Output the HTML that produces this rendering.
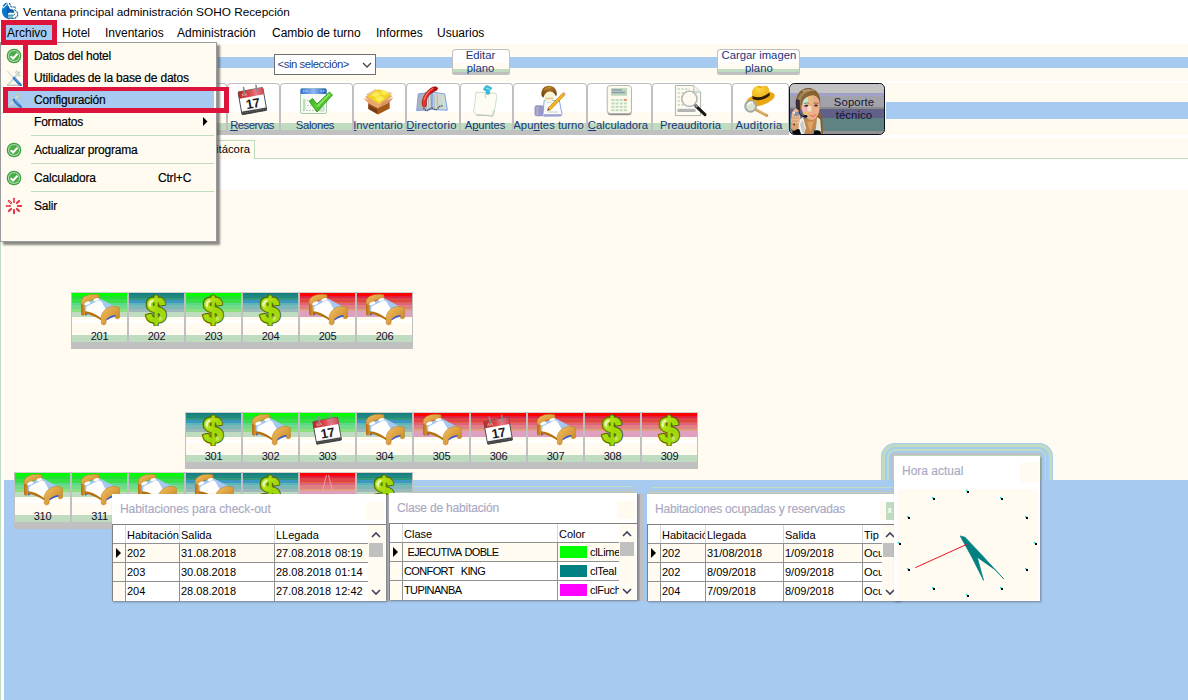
<!DOCTYPE html>
<html><head><meta charset="utf-8"><title>SOHO</title><style>
*{box-sizing:border-box;margin:0;padding:0}
html,body{width:1188px;height:700px;overflow:hidden;background:#FFFBF0;font-family:"Liberation Sans",sans-serif;font-size:12px;color:#000}
.a{position:absolute}
.t{position:absolute;white-space:nowrap;line-height:1}
.room{position:absolute;width:57px;height:57px;border-left:1px solid #C0C0C0;border-right:1px solid #C0C0C0;overflow:hidden;background:#FFFBF0}
.room .g{position:absolute;left:0;top:0;width:100%;height:24.5px}
.room .w{position:absolute;left:0;top:28px;width:100%;height:3px;background:#fff}
.room .m{position:absolute;left:0;top:43px;width:100%;height:7px;background:#C0DCC0}
.room .s{position:absolute;left:-1px;top:50px;width:58px;height:7px;background:#C0C0C0}
.room .n{position:absolute;left:0;top:38.5px;width:100%;text-align:center;font-size:11px;line-height:11px;color:#101030;letter-spacing:-0.35px}
.room svg{position:absolute}
.tb{position:absolute;top:83px;height:52px;border:1px solid #C0C0C0;border-bottom:none;border-radius:4px 4px 0 0;background:#fff;overflow:hidden}
.tb .c{position:absolute;left:0;top:28px;width:100%;height:12px;background:#FFFBF0}
.tb .m{position:absolute;left:0;top:39px;width:100%;height:7px;background:#C0DCC0}
.tb .s{position:absolute;left:-1px;top:46px;width:200px;height:6px;background:#C0C0C0}
.tb .l{position:absolute;left:-11.5px;right:-8.5px;top:35px;text-align:center;font-size:11.3px;line-height:13px;color:#1a357e;white-space:nowrap}
.tb u{text-decoration:underline}
.mi{position:absolute;left:34px;font-size:12px;line-height:14px;white-space:nowrap;color:#000;letter-spacing:-0.2px;-webkit-text-stroke:0.18px #000}
.sep{position:absolute;left:31px;width:183px;height:1px;background:#C0DCC0}
.pn{position:absolute;background:#fff;box-shadow:1px 1px 2px rgba(80,80,80,.6)}
.pt{position:absolute;font-size:12px;line-height:14px;color:#a9a9c3;white-space:nowrap;-webkit-text-stroke:0.15px #a9a9c3}
.gc{position:absolute;font-size:11px;line-height:12px;white-space:nowrap;color:#000;overflow:hidden;word-spacing:1px}
.vl{position:absolute;width:1px;background:#909090}
.hl{position:absolute;height:1px;background:#909090}
</style></head><body>
<svg width="0" height="0" style="position:absolute">
<defs>
<linearGradient id="wood" x1="0" y1="0" x2="1" y2="1"><stop offset="0" stop-color="#f0c060"/><stop offset=".5" stop-color="#dca040"/><stop offset="1" stop-color="#c08018"/></linearGradient>
<linearGradient id="wood2" x1="0" y1="0" x2="1" y2="0"><stop offset="0" stop-color="#b86c10"/><stop offset="1" stop-color="#d89830"/></linearGradient>
<linearGradient id="usdg" x1="0" y1="0" x2="1" y2="1"><stop offset="0" stop-color="#f0f4c0"/><stop offset=".3" stop-color="#c0e020"/><stop offset=".6" stop-color="#98d800"/><stop offset="1" stop-color="#b8d840"/></linearGradient>
<linearGradient id="calr" x1="0" y1="0" x2="1" y2="0"><stop offset="0" stop-color="#b82828"/><stop offset=".45" stop-color="#d84848"/><stop offset=".7" stop-color="#e87888"/><stop offset="1" stop-color="#d04858"/></linearGradient>
<linearGradient id="calp" x1="0" y1="0" x2="0" y2="1"><stop offset="0" stop-color="#ffffff"/><stop offset=".8" stop-color="#ffffff"/><stop offset="1" stop-color="#c8c8c8"/></linearGradient>
<linearGradient id="blu" x1="0" y1="0" x2="1" y2="0"><stop offset="0" stop-color="#3070d8"/><stop offset=".5" stop-color="#90b8f0"/><stop offset="1" stop-color="#2060c8"/></linearGradient>
<linearGradient id="grn" x1="0" y1="0" x2="1" y2="1"><stop offset="0" stop-color="#28a010"/><stop offset=".5" stop-color="#58d030"/><stop offset="1" stop-color="#209008"/></linearGradient>
<linearGradient id="redp" x1="0" y1="0" x2="1" y2="0"><stop offset="0" stop-color="#f04030"/><stop offset=".5" stop-color="#d81818"/><stop offset="1" stop-color="#a00808"/></linearGradient>
<radialGradient id="hatg" cx=".4" cy=".3" r=".8"><stop offset="0" stop-color="#ffd840"/><stop offset="1" stop-color="#e8a810"/></radialGradient>
<radialGradient id="hair" cx=".5" cy=".2" r=".8"><stop offset="0" stop-color="#b07828"/><stop offset="1" stop-color="#704008"/></radialGradient>
</defs>

<symbol id="bed" viewBox="0 0 57 40" overflow="visible">
<!-- blue sheet -->
<path d="M10 12.500 L27 6 L46.500 16.500 L33 19.500 L28.500 26.500 L13 21Z" fill="#a6c8f0"/>
<!-- white blanket -->
<path d="M14.500 14.500 L27 8.300 L29.500 9.800 L35 19.500 L32 21 L29 26.500 L14 20.500Z" fill="#fffefa"/>
<path d="M24 10 L28.500 9.800 L33.500 18.500 L30 21Z" fill="#fff"/>
<!-- headboard -->
<path d="M9.200 8.500 Q10.500 4.500 17 2.700 Q23 1.600 26.800 2.700 L27.200 6.500 L18 8.500 L12.500 11 L10.500 13.500 L9.200 13Z" fill="url(#wood)" stroke="#b87818" stroke-width=".5"/>
<!-- pillows -->
<ellipse cx="15.200" cy="11.300" rx="3.100" ry="1.600" fill="#fff" transform="rotate(-20 15.200 11.300)"/>
<ellipse cx="24.200" cy="7.600" rx="3" ry="1.500" fill="#fff" transform="rotate(-14 24.200 7.600)"/>
<!-- left post -->
<path d="M9 12 L12.800 13 L13 22.500 L11 24 L9 22.500Z" fill="url(#wood2)"/>
<!-- side rail -->
<path d="M12.800 19.300 Q20 19.500 29.500 26.300 L29.500 28.600 Q20 22 12.800 21.700Z" fill="#b4700c"/>
<path d="M13 21.800 L16 22.800 L13 23.500Z" fill="#3858c8"/>
<!-- footboard -->
<path d="M29.300 23.500 Q32 16 40 14.500 Q45 14 47.300 15.800 L47.600 25.500 L46 26.800 L43.600 26.300 L43.500 23 Q38 23.500 34.500 27 L33.800 32 L31.500 33 L29.300 31.800Z" fill="url(#wood)" stroke="#b87818" stroke-width=".5"/>
<path d="M34.500 27 Q38 23.500 43.500 23 L43.500 24.500 Q38.500 25.500 34.400 28.500Z" fill="#3858c8"/>
</symbol>

<symbol id="usd" viewBox="0 0 24 32" overflow="visible">
<g font-family="Liberation Sans, sans-serif" font-weight="bold" font-size="35" text-anchor="middle">
<text x="12" y="28" fill="#566800" stroke="#566800" stroke-width="3.400" stroke-linejoin="round">$</text>
<text x="12" y="28" fill="url(#usdg)" stroke="#a4dc08" stroke-width="1.200" stroke-linejoin="round">$</text>
</g>
<path d="M4.500 11 q.2 -4 4.500 -5.500 l.8 1.800 q-3 1.200 -3.200 3.700 q0 1.500 1 2.500 q-2.800 -.5 -3.100 -2.500z" fill="#fff" opacity=".7"/>
<path d="M14 22 q3.500 -.5 4 2 q0 2 -2.500 3z" fill="#fff" opacity=".35"/>
</symbol>

<symbol id="cal2" viewBox="0 0 30 30" overflow="visible">
<g transform="rotate(-10 14.400 16)">
<rect x="2.400" y="5" width="24" height="22" rx="1.200" fill="url(#calp)" stroke="#4a4a4a" stroke-width=".9"/>
<path d="M2.400 11.500 v-5.300 q0 -1.200 1.200 -1.200 h21.600 q1.200 0 1.200 1.200 v5.300z" fill="url(#calr)"/>
<path d="M5.500 10 l1 -2.500 l1 2.500 m.8 0 l1 -2.500 l1 2.500" stroke="#f8c0c0" stroke-width=".6" fill="none"/>
<rect x="2.400" y="24.300" width="24" height="2.700" fill="#3c3c3c"/>
<path d="M3 25.600 h23" stroke="#777" stroke-width=".7" stroke-dasharray="1.200 1"/>
<rect x="7.600" y="1" width="1.500" height="7.500" rx=".6" fill="#8c8c8c"/><rect x="19.600" y="1" width="1.500" height="7.500" rx=".6" fill="#8c8c8c"/>
<text x="14.400" y="22.600" font-family="Liberation Sans, sans-serif" font-weight="bold" font-size="12.500" text-anchor="middle" fill="#1c1c24" letter-spacing="-.3">17</text>
</g>
</symbol>

<symbol id="ok" viewBox="0 0 16 16">
<circle cx="8" cy="8" r="7.300" fill="#3c9c3c"/>
<circle cx="8" cy="8" r="6.100" fill="#b4e0b4"/>
<circle cx="8" cy="8" r="5.100" fill="#4cac4c"/>
<path d="M4.600 8.100 L7.100 10.500 L11.500 5.700" fill="none" stroke="#fff" stroke-width="2"/>
</symbol>
<symbol id="tools" viewBox="0 0 16 16" overflow="visible">
<path d="M1.500 1 L7.500 8" stroke="#c8ccc8" stroke-width="1"/>
<path d="M12.500 1.500 L9 6 L2 14 L1 15 L6 12 L10.500 6.500 L14 3.500Z" fill="#d8e4d8" stroke="#b8c8b8" stroke-width=".5"/>
<path d="M9.500 3 l1.500 -2.500 M11 4 l3 -2 M12 5.500 l3 .2" stroke="#b8ccb8" stroke-width="1.100"/>
<path d="M8 8 L14.500 15" stroke="#2c74c4" stroke-width="2.600" stroke-linecap="round"/>
<path d="M8.300 7.700 L13 12.600" stroke="#8cc0f0" stroke-width=".8"/>
<path d="M1 15.200 H14" stroke="#a8a8a8" stroke-width="1"/>
</symbol>
<symbol id="exit" viewBox="0 0 18 18">
<g stroke="#e03848" stroke-width="2.100" stroke-linecap="round">
<path d="M9 1.800 v3.200M9 13 v3.200M1.800 9 h3.200M13 9 h3.200M3.900 3.900 l2.200 2.200M11.900 11.900 l2.200 2.200M14.100 3.900 l-2.200 2.200M3.900 14.100 l2.200 -2.200"/>
</g>
<g stroke="#f8a0a8" stroke-width=".8" stroke-linecap="round"><path d="M9 2.300 v2.200M2.300 9 h2.200M4.300 4.300 l1.500 1.500"/></g>
</symbol>
<symbol id="clock" viewBox="0 0 141 111">
<g fill="#00e0e8"><rect x="69" y="1" width="1.6" height="1.6"/><rect x="103" y="8" width="1.6" height="1.6"/><rect x="128" y="27" width="1.6" height="1.6"/><rect x="137" y="53" width="1.6" height="1.6"/><rect x="128" y="79" width="1.6" height="1.6"/><rect x="103" y="98" width="1.6" height="1.6"/><rect x="69" y="105" width="1.6" height="1.6"/><rect x="35" y="98" width="1.6" height="1.6"/><rect x="10" y="79" width="1.6" height="1.6"/><rect x="1" y="53" width="1.6" height="1.6"/><rect x="10" y="27" width="1.6" height="1.6"/><rect x="35" y="8" width="1.6" height="1.6"/></g>
<g fill="#000"><rect x="70" y="2" width="2" height="2"/><rect x="104" y="9" width="2" height="2"/><rect x="129" y="28" width="2" height="2"/><rect x="138" y="54" width="2" height="2"/><rect x="129" y="80" width="2" height="2"/><rect x="104" y="99" width="2" height="2"/><rect x="70" y="106" width="2" height="2"/><rect x="36" y="99" width="2" height="2"/><rect x="11" y="80" width="2" height="2"/><rect x="2" y="54" width="2" height="2"/><rect x="11" y="28" width="2" height="2"/><rect x="36" y="9" width="2" height="2"/></g>
<path d="M63.200 46.900 L68 48.200 L83.600 64.700 L106.800 90 L97.600 80.400 L80.200 68.200 L86.600 91.400 L74.900 68.200 L66.200 52.500Z" fill="#008080" stroke="#008080" stroke-width=".7" stroke-linejoin="miter"/>
<path d="M70.900 54.800 L18.300 78.700" stroke="#f01028" stroke-width="1"/>
</symbol>
<symbol id="appicon" viewBox="0 0 20 20">
<path d="M8 2.800 Q2 4.500 1.900 11 Q2.300 17.500 8 18.900 L8 2.800Z" fill="#0878c8"/>
<path d="M2.300 7.800 L7.600 3 L8 4 L3 8.500Z" fill="#fff"/>
<path d="M3 6 L6.500 3" stroke="#0878c8" stroke-width="1.200"/>
<path d="M8.500 5.800 L10 9 L13.200 9.500 L13 11.500 L11.500 12.500 L9 12.800 L7 14.500 L6.800 9Z" fill="#0858c4"/>
<path d="M10.500 9.500 L13.500 10 L14.500 12.500 L12 13 L10.500 12Z" fill="#10688c"/>
<path d="M9.300 3 L11.200 6.800 L15.500 7.200 L15.500 8.500 M14.300 9.600 L16.600 11.500 L17.800 13.600 L17.500 15.800 L15 18.300 L8 18.600" fill="none" stroke="#106490" stroke-width="1.100" stroke-dasharray="2.500 .6"/>
<path d="M8 15.200 h5.500 l1.500 -1.500 M8 17 h5" stroke="#107090" stroke-width="1" fill="none"/>
</symbol>
</svg>

<div class="a" style="left:0px;top:0px;width:1188px;height:44px;background:#fff;"></div>
<svg class="a" style="left:0px;top:0px" width="20" height="20" viewBox="0 0 20 20"><use href="#appicon"/></svg>
<div class="t" style="left:23px;top:7px;font-size:11.8px;color:#000;letter-spacing:0px">Ventana principal administración SOHO Recepción</div>
<div class="a" style="left:6px;top:25px;width:46px;height:15px;background:#A6CAF0;"></div>
<div class="t" style="left:7px;top:26.5px;font-size:12px;color:#000;">Archivo</div>
<div class="t" style="left:62px;top:26.5px;font-size:12px;color:#000;">Hotel</div>
<div class="t" style="left:105px;top:26.5px;font-size:12px;color:#000;">Inventarios</div>
<div class="t" style="left:177px;top:26.5px;font-size:12px;color:#000;">Administración</div>
<div class="t" style="left:272px;top:26.5px;font-size:12px;color:#000;">Cambio de turno</div>
<div class="t" style="left:376px;top:26.5px;font-size:12px;color:#000;">Informes</div>
<div class="t" style="left:437px;top:26.5px;font-size:12px;color:#000;">Usuarios</div>
<div class="a" style="left:0px;top:44px;width:1px;height:656px;background:#C0DCC0;"></div>
<div class="a" style="left:1px;top:44px;width:3px;height:656px;background:#fff;"></div>
<div class="a" style="left:218px;top:57px;width:970px;height:11px;background:#A6CAF0;"></div>
<div class="a" style="left:218px;top:81px;width:970px;height:2px;background:#fff;"></div>
<div class="a" style="left:886px;top:102px;width:302px;height:17px;background:#A6CAF0;"></div>
<div class="a" style="left:218px;top:135px;width:970px;height:3px;background:#fff;"></div>
<div class="a" style="left:218px;top:158px;width:970px;height:1px;background:#C0DCC0;"></div>
<div class="a" style="left:218px;top:159px;width:970px;height:31px;background:#fff;"></div>
<div class="a" style="left:4px;top:480px;width:1184px;height:220px;background:#A6CAF0;"></div>
<div class="a" style="left:274px;top:54px;width:101.5px;height:21px;background:#fff;border:1px solid #707070"></div>
<div class="t" style="left:277.6px;top:59px;font-size:11.3px;color:#1c3c84;letter-spacing:-0.43px">&lt;sin selección&gt;</div>
<svg class="a" style="left:361.500px;top:62px" width="10" height="7" viewBox="0 0 10 7"><path d="M1 1 L5 5 L9 1" fill="none" stroke="#44443a" stroke-width="1.300"/></svg>
<div class="a" style="left:451.5px;top:49px;width:58px;height:25.6px;background:#fff;border:1px solid #C0C0C0;border-bottom:none;border-radius:3.5px 3.5px 2px 2px;overflow:hidden"><div class="a" style="left:0;top:13.200px;width:100%;height:7px;background:#FFFBF0"></div><div class="a" style="left:0;top:19.200px;width:100%;height:3px;background:#C0DCC0"></div><div class="a" style="left:-1px;top:22.100px;width:58px;height:4px;background:#C0C0C0"></div><div class="a" style="left:0;top:-1.400px;width:100%;text-align:center;font-size:11.3px;line-height:13.500px;color:#1a357e;white-space:nowrap">Editar<br>plano</div></div>
<div class="a" style="left:717.3px;top:49px;width:83.2px;height:25.6px;background:#fff;border:1px solid #C0C0C0;border-bottom:none;border-radius:3.5px 3.5px 2px 2px;overflow:hidden"><div class="a" style="left:0;top:13.200px;width:100%;height:7px;background:#FFFBF0"></div><div class="a" style="left:0;top:19.200px;width:100%;height:3px;background:#C0DCC0"></div><div class="a" style="left:-1px;top:22.100px;width:83.2px;height:4px;background:#C0C0C0"></div><div class="a" style="left:0;top:-1.400px;width:100%;text-align:center;font-size:11.3px;line-height:13.500px;color:#1a357e;white-space:nowrap">Cargar imagen<br>plano</div></div>
<div class="tb" style="left:173px;width:54px"><div class="c"></div><div class="m"></div><div class="s"></div><div class="l" style="letter-spacing:0px"></div></div>
<div class="tb" style="left:227px;width:53px"><div class="c"></div><div class="m"></div><div class="s"></div><div class="l" style="letter-spacing:-0.5px"><u>R</u>eservas</div></div>
<div class="tb" style="left:280px;width:73px"><div class="c"></div><div class="m"></div><div class="s"></div><div class="l" style="letter-spacing:-0.36px">Salones</div></div>
<div class="tb" style="left:353px;width:53px"><div class="c"></div><div class="m"></div><div class="s"></div><div class="l" style="letter-spacing:0px"><u>I</u>nventario</div></div>
<div class="tb" style="left:406px;width:54px"><div class="c"></div><div class="m"></div><div class="s"></div><div class="l" style="letter-spacing:0.24px"><u>D</u>irectorio</div></div>
<div class="tb" style="left:460px;width:53px"><div class="c"></div><div class="m"></div><div class="s"></div><div class="l" style="letter-spacing:-0.13px">A<u>p</u>untes</div></div>
<div class="tb" style="left:513px;width:74px"><div class="c"></div><div class="m"></div><div class="s"></div><div class="l" style="letter-spacing:0px">Apu<u>n</u>tes turno</div></div>
<div class="tb" style="left:587px;width:65px"><div class="c"></div><div class="m"></div><div class="s"></div><div class="l" style="letter-spacing:0px"><u>C</u>alculadora</div></div>
<div class="tb" style="left:652px;width:80px"><div class="c"></div><div class="m"></div><div class="s"></div><div class="l" style="letter-spacing:0px">Preauditoria</div></div>
<div class="tb" style="left:732px;width:57px"><div class="c"></div><div class="m"></div><div class="s"></div><div class="l" style="letter-spacing:0.27px">Audi<u>t</u>oria</div></div>
<svg class="a" style="left:0;top:80px;pointer-events:none" width="1188" height="60" viewBox="0 80 1188 60">
<!-- calendar -->
<g transform="translate(237.3,84.3)"><use href="#cal2" width="31.5" height="31.5"/></g>
<!-- salones -->
<g transform="translate(300,88)">
<rect x=".5" y=".5" width="26" height="25" rx="1.500" fill="#f6faf2" stroke="#a8cca8"/>
<path d="M.5 6 v-4 q0 -1.500 1.500 -1.500 h23 q1.500 0 1.500 1.500 v4z" fill="url(#blu)"/>
<path d="M3 3h5M20.500 3h4" stroke="#e0ecff" stroke-width="1.200" stroke-dasharray="1.500 .8"/>
<rect x="3" y="11" width="2.500" height="11" fill="#c4dcc4"/>
<path d="M7 12.500h6M7 17.500h8M3 22.500h16" stroke="#a8c8a8" stroke-width="1.200" stroke-dasharray="1.500 1.500"/>
<path d="M19 23 l5 -5 v5z" fill="#dde8dd" stroke="#a8c8a8" stroke-width=".6"/>
<path d="M9.200 13.200 L12.500 10.500 L17 16 L29.500 4 L32.500 7 L17 24 Z" fill="url(#grn)" stroke="#1c7c08" stroke-width=".7"/>
<path d="M17.500 18.500 L29.500 6" stroke="#a8f088" stroke-width="1.200" opacity=".8"/>
</g>
<!-- box -->
<g transform="translate(363,87)">
<path d="M3 7.500 L12.500 2 L16 5 L6 10Z" fill="#f0c098"/>
<path d="M17 2.500 L29.500 6 L26 10 L15 5.500Z" fill="#f0c8a0"/>
<path d="M2 10 L15 3 L29.500 9 L15 21Z" fill="#e8a870"/>
<path d="M4.500 9.500 L15 2 L27.500 8 L16 17Z" fill="#f0d418"/>
<path d="M8 8 L13 4.500 L18 7 L13 10.500Z M17 5 L21 3 L25.500 6 L21 8.500Z M11.500 12 L17 8.500 L22 11.500 L16.500 15Z" fill="#faec58"/>
<path d="M5.200 16 L14.900 20.900 L14.900 27.500 L5.200 22Z" fill="#7c3c10"/>
<path d="M14.900 20.900 L26.700 15 L26.700 21.400 L14.900 27.500Z" fill="#a45818"/>
<path d="M.3 11 L5.200 16 L14.900 20.900 L10.500 14.500Z" fill="#eca468"/>
<path d="M14.900 20.900 L26.700 15 L30.500 10.500 L19.500 15.500Z" fill="#d8905c"/>
<path d="M5.200 16 L14.900 20.900 L14.900 22.500 L5.200 17.500Z" fill="#b87840" opacity=".7"/>
</g>
<!-- phone / directorio -->
<g transform="translate(416,86)">
<path d="M2.300 7.900 L15.200 6.200 L15.700 23.500 L.7 24.600Z" fill="#aeb4bc" stroke="#6c98e4" stroke-width=".9"/>
<path d="M16.300 6.200 L28.700 7.900 L31.400 24.200 L16.300 23.500Z" fill="#d4dad4" stroke="#6c98e4" stroke-width=".9"/>
<path d="M11 8 L12 23 M13.500 7.500 L14 23" stroke="#d8dce0" stroke-width="1.300"/>
<path d="M18 8 L18.500 22 M21 8.500 L22 22.500" stroke="#b8c0b8" stroke-width="1.500"/>
<path d="M24 9 L26 22" stroke="#c8dcc8" stroke-width="2.500"/>
<path d="M7.500 22 Q10 26.500 13 23.500 Q16 20.500 18 23 Q20 25 22 22 Q24 19.500 26.500 20" fill="none" stroke="#444c58" stroke-width="1.300" stroke-dasharray="1.400 .7"/>
<path d="M21 1.200 Q19 .4 16.500 1.200 Q8.500 5.500 6.200 15 Q5.500 19.500 7.500 21 Q10.500 21.500 10.500 17.500 Q10 16 10.800 13 Q12.500 8 18 5.500 Q21.500 4.500 21.800 2.500Z" fill="url(#redp)" stroke="#8c0c0c" stroke-width=".6"/>
<path d="M17.500 2.200 Q10.500 6 8 14" fill="none" stroke="#ff9080" stroke-width="1.200" opacity=".8"/>
</g>
<!-- note / apuntes -->
<g transform="translate(473,85)">
<path d="M3.500 30.500 L20 31.500 L22 25.500 L3 29Z" fill="#a8a8a8"/>
<path d="M2.800 7.200 L22.700 8.300 L23.800 11.500 L21.600 25 L19.500 30.500 L2.800 29.500 L.6 26.100 L2.200 16.400Z" fill="#fffcf3" stroke="#c4dcc4" stroke-width=".9"/>
<path d="M19.500 30.500 L19 26.500 L21.600 25Z" fill="#e8efe4" stroke="#c4dcc4" stroke-width=".5"/>
<path d="M12 9 q1 2 .5 4" stroke="#b8d8c8" stroke-width="1" fill="none"/>
<path d="M11.500 2.500 Q12 .3 14.500 .5 L18.500 2.500 Q19.500 4 17.500 5 L16.500 5.500 L17 8.500 Q15 10 13 9 L13 6 Q10.500 5.500 10.300 4Z" fill="#34bcd4" stroke="#5c9cd4" stroke-width=".5"/>
<path d="M13 3 L17 4.500" stroke="#a0f0f8" stroke-width="1"/>
</g>
<!-- user / apuntes turno -->
<g transform="translate(534,85)">
<rect x=".5" y="20.200" width="9.500" height="11" rx="2.500" fill="#9898c4"/>
<rect x="2" y="22" width="3" height="8" fill="#a8a8d0"/>
<path d="M10.200 15.300 L25.300 15.300 L28 29.300 Q28 31 26 31 L10 31.200 Q8.500 31 9 29Z" fill="#fdfdff" stroke="#7c9ce4" stroke-width=".9"/>
<path d="M10 30 H27" stroke="#8c8cc0" stroke-width="1.400"/>
<ellipse cx="15" cy="11.500" rx="5" ry="5.300" fill="#fbf4d4"/>
<path d="M11 13.500 h8" stroke="#e0c890" stroke-width="1.500"/>
<path d="M12 17 q3 2 6 0" stroke="#c8dcc8" stroke-width="1" fill="none"/>
<path d="M7.500 10.500 Q6.500 2 14 .8 Q21.500 .5 22.800 8 Q23 10.500 22 11.500 Q19.500 6 15.500 6.500 Q11 7 9.500 12.500 Q8 12 7.500 10.500Z" fill="url(#hair)"/>
<path d="M10 5 Q13 2 17 2.500" stroke="#d0a040" stroke-width="1" fill="none" opacity=".8"/>
<path d="M13.400 25.600 L14.600 22.400 L28.600 8.200 L30.800 10 L16.600 24.800Z" fill="#f4b41c" stroke="#a87410" stroke-width=".6"/>
<path d="M28.600 8.200 L29.800 7 L31.800 8.800 L30.800 10Z" fill="#f090a0"/>
<path d="M13.400 25.600 L14.300 23.500 L15.500 24.800Z" fill="#403020"/>
<path d="M14 27 h10" stroke="#a8c8a8" stroke-width=".8"/>
</g>
<!-- calc -->
<g transform="translate(606,85)">
<rect x="1.500" y="1.500" width="24" height="28.800" rx="3" fill="#909090"/>
<rect x="1.200" y=".5" width="24.300" height="28" rx="3" fill="#fdf9ec" stroke="#b0b0b0" stroke-width=".9"/>
<rect x="4.900" y="3.200" width="16.200" height="7.500" fill="#bcd4bc"/>
<path d="M6 5 h10 M6 7.500 h13" stroke="#8c9cb0" stroke-width="1.300"/>
<g fill="#bcdcbc">
<rect x="5.500" y="14" width="3" height="2"/><rect x="9.600" y="14" width="3" height="2"/><rect x="13.700" y="14" width="3" height="2"/><rect x="17.800" y="14" width="3" height="2" fill="#e89070"/>
<rect x="5.500" y="17.400" width="3" height="2"/><rect x="9.600" y="17.400" width="3" height="2"/><rect x="13.700" y="17.400" width="3" height="2"/><rect x="17.800" y="17.400" width="3" height="2"/>
<rect x="5.500" y="20.800" width="3" height="2"/><rect x="9.600" y="20.800" width="3" height="2"/><rect x="13.700" y="20.800" width="3" height="2"/><rect x="17.800" y="20.800" width="3" height="2"/>
<rect x="5.500" y="24.200" width="3" height="2"/><rect x="9.600" y="24.200" width="3" height="2"/><rect x="13.700" y="24.200" width="3" height="2"/><rect x="17.800" y="24.200" width="3" height="2"/>
</g>
</g>
<!-- preauditoria -->
<g transform="translate(675,85)">
<path d="M.4 .5 L18.700 .5 L25.600 7 L25.600 30.600 L.4 30.600Z" fill="#fdfaf0" stroke="#a4aca4" stroke-width=".9"/>
<path d="M18.700 .5 L18.700 7 L25.600 7" fill="#eef2ea" stroke="#a4aca4" stroke-width=".7"/>
<path d="M2.500 4h12M2.500 8h20M2.500 12h20M2.500 16h20M2.500 20h20" stroke="#c0dcc0" stroke-width="1.300" stroke-dasharray="2.500 1.200"/>
<rect x="2.500" y="23.800" width="18" height="3.200" fill="#b4b4b4"/>
<circle cx="14.400" cy="13.800" r="7.600" fill="#fff9f2" fill-opacity=".93" stroke="#b4b8b4" stroke-width="1.500"/>
<path d="M10 10 q3 -3 7 -2" stroke="#fff" stroke-width="1.500" fill="none"/>
<path d="M20.800 20.800 L30 29.600" stroke="#181818" stroke-width="3" stroke-linecap="round"/>
<path d="M20 19.500 L22.500 22" stroke="#909090" stroke-width="2.200"/>
</g>
<!-- hat / auditoria -->
<g transform="translate(745,85)">
<ellipse cx="15.300" cy="14.200" rx="15" ry="6.200" fill="#eaa810" transform="rotate(-17 15.300 14.200)"/>
<path d="M7.500 12.500 Q5.500 2.500 12 1 Q15 .2 17 1.500 Q20 -.2 22.500 1.500 Q25 4 24.500 9.500 Q17 15.500 7.500 12.500Z" fill="url(#hatg)"/>
<path d="M13 1.500 Q16 3.500 17 1.700" stroke="#d89808" stroke-width="1" fill="none"/>
<path d="M7.400 11 Q16 14.500 24.600 7.600 L24.600 10.800 Q16 17.500 7.600 14Z" fill="#2c1c08"/>
<path d="M10.600 24.600 L21.800 30.500" stroke="#c8984c" stroke-width="2.800" stroke-linecap="round"/>
<path d="M11 24.300 L21 29.600" stroke="#ecc888" stroke-width=".9"/>
<circle cx="5.600" cy="21.300" r="5.400" fill="#dce4d0" stroke="#a4a8a8" stroke-width="1.900"/>
<path d="M2.500 20 q2 -3.500 5.500 -2.500" stroke="#fff" stroke-width="1.400" fill="none"/>
</g>
</svg>

<div class="a" style="left:789px;top:83px;width:96px;height:52px;border:1.3px solid #10101c;border-radius:5.5px;background:#5f8383;overflow:hidden"><div class="a" style="left:0;top:0;width:100%;height:8.8px;background:#C3C3C3"></div><div class="a" style="left:0;top:8.6px;width:100%;height:0.8px;background:#b0d0d0"></div><div class="a" style="left:0;top:9.2px;width:100%;height:2.8px;background:#a0a0c8"></div><div class="a" style="left:0;top:11.9px;width:100%;height:11px;background:#a2a2aa"></div><div class="a" style="left:0;top:22.8px;width:100%;height:2.3px;background:#8a8a8a"></div><div class="a" style="left:0;top:25px;width:100%;height:8.8px;background:#606088"></div><div class="a" style="left:0;top:46.7px;width:100%;height:4px;background:#929292"></div><svg class="a" style="left:0;top:0" width="36" height="50" viewBox="0 0 36 50">
<!-- hair back -->
<path d="M6 24 Q4.500 10 12 5.800 Q18.500 2.800 25 6 Q30.500 9.500 30.200 19 L30 30 L31.500 38 L33 50 L26 50 L24 30 Z" fill="#86602c"/>
<path d="M7.500 24 Q6 13 13 7.500 Q18.500 4.800 24.500 7.200 Q21 6.800 17 8.500 Q10 12 10.500 22Z" fill="#a08458"/>
<path d="M12 6.300 Q18.500 3.200 25.500 6.800 Q19.500 5.800 14 8Z" fill="#b89c78"/>
<path d="M14 5.500 Q18 4 22 5" stroke="#74503c" stroke-width="1" fill="none"/>
<path d="M6 15 Q5 24 8 29 L10 28 L9.800 16Z" fill="#3c2c38"/>
<!-- neck/chest -->
<path d="M13.500 35 L27 34 L26 43 L21 50 L15.500 50 L13 42Z" fill="#c4864a"/>
<path d="M17 38 L24 37 L20.500 48Z" fill="#dca466"/>
<!-- face -->
<path d="M10.800 21 Q10.500 11.500 19.500 10.500 Q29 10.300 29.800 20 Q30.200 29 26 34 Q22 37.500 17.500 34.500 Q11.500 30 10.800 21Z" fill="#eab088"/>
<path d="M12 18 Q13.500 12.500 18 12.500 L18.500 19 L14.500 21.500 L12 21Z" fill="#c4e4d4"/>
<path d="M18 12.500 Q21 11.500 23 12.500 L23 19.500 L18.500 19.500Z" fill="#e8bc80"/>
<path d="M23 12.500 Q28 13.500 29 20 L23 20.500Z" fill="#e8aa8c"/>
<path d="M11.500 23.500 L16 23 L16.500 27 L13 28Z" fill="#ecb4d4"/>
<path d="M17 22 L21.500 22 L21.500 27.500 L17.500 27.500Z" fill="#f4dcc8"/>
<path d="M13 28 L18 28 L18 31 L15 32Z" fill="#e8c070"/>
<!-- hair front strands -->
<path d="M10.500 21 Q9.500 11 18 9.300 Q24 8.300 29.300 12.500 Q24 10.500 19 12 Q12.500 14 12 22Z" fill="#8a6434"/>
<!-- eyes -->
<ellipse cx="16.300" cy="21.700" rx="1.900" ry="1" fill="#3c2830"/>
<ellipse cx="26" cy="21.400" rx="1.900" ry="1" fill="#3c2830"/>
<path d="M13.800 19.800 q2.500 -1.500 5 -.5 M23.500 19.300 q2.500 -1 5 .3" stroke="#7c5028" stroke-width=".7" fill="none"/>
<!-- mouth -->
<path d="M18.800 30.800 Q22.500 32.800 26.500 30 Q23.500 35 18.800 30.800Z" fill="#e04858"/>
<path d="M19.800 31.200 Q22.500 32.200 25.500 30.700 Q22.500 32 19.800 31.200Z" fill="#fff"/>
<!-- collar & jacket -->
<path d="M8 37 L13 33 L16 44 L14 50 L6 50 Z" fill="#f0f0ea"/>
<path d="M10 40 L13 36 L15 46 L13 50Z" fill="#c8ccc4"/>
<path d="M27 33 L31 36 L33 50 L24 50 L26 43Z" fill="#e4e8dc"/>
<path d="M29.800 29 L32 32 L33 50 L31.300 50Z" fill="#8c5a20"/>
<path d="M2 50 L3 45.500 Q6 43.500 9.500 45.500 L11 50Z" fill="#080808"/>
<path d="M23.500 50 L24.500 46.500 Q28 45.500 30.500 47.500 L31 50Z" fill="#080808"/>
<!-- hand with phone -->
<path d="M1.500 31 Q2 26 6 24.500 L9.500 27 L10.500 34 L8.500 42 L3 44 L1 38Z" fill="#e8b890"/>
<path d="M3.500 28.500 L9.500 27.500 L10 31 L4.500 32.500Z" fill="#8890a4"/>
<path d="M2 29 L5 27.500 L5 30Z" fill="#f4ece4"/>
<path d="M2 34 h7 M2 37 h6" stroke="#c89468" stroke-width=".8"/>
<path d="M1 38.500 L8 39.500 L9 44 L4 47 L.8 44Z" fill="#dca070"/>
<path d="M2.500 40 L5 39.500 L5 42Z" fill="#5c4030"/>
<!-- headset -->
<path d="M9 27 Q9.500 32.500 15 32.500" fill="none" stroke="#202020" stroke-width="1"/>
<ellipse cx="15.600" cy="32.200" rx="1.800" ry="1.300" fill="#0c0c0c"/>
</svg>
<div class="a" style="left:33px;top:11.5px;width:62px;text-align:center;font-size:11.3px;line-height:13px;color:#14142c;letter-spacing:.1px">Soporte<br>técnico</div></div>
<div class="a" style="left:200px;top:140px;width:55px;height:19px;background:#FFFBF0;border:1px solid #C0DCC0;border-bottom:none"></div>
<div class="t" style="left:208.5px;top:144px;font-size:11.3px;color:#000;">Bitácora</div>
<div class="a" style="left:393px;top:486px;width:240px;height:1px;background:#C0DCC0;"></div>
<div class="a" style="left:391px;top:489.3px;width:244px;height:1px;background:#bcc4c8;"></div>
<div class="a" style="left:390px;top:491.4px;width:246px;height:1.6px;background:#c0ccc0;"></div>
<div class="a" style="left:651px;top:487px;width:245px;height:1px;background:#C0DCC0;"></div>
<div class="a" style="left:649px;top:490.3px;width:249px;height:1px;background:#bcc4c8;"></div>
<div class="a" style="left:648px;top:492.4px;width:251px;height:1.6px;background:#c0ccc0;"></div>
<div class="room" style="left:71px;top:292px"><div class="g" style="background:linear-gradient(#00ff00 0px,#00ff00 4.25px,#20e030 4.25px,#20e030 6.75px,#38de48 6.75px,#38de48 11px,#5cd88c 11px,#5cd88c 13.25px,#70dc88 13.25px,#70dc88 16.75px,#8ce080 16.75px,#8ce080 20px,#C0DCC0 20px,#C0DCC0 24.5px)"></div><div class="a" style="left:0;top:0;width:100%;height:0.6px;background:#d0d0d0"></div><div class="w"></div><div class="m"></div><div class="s"></div><svg style="left:0;top:0" width="57" height="40" viewBox="0 0 57 40"><use href="#bed"/></svg><div class="n">201</div></div>
<div class="room" style="left:128px;top:292px"><div class="g" style="background:linear-gradient(#148080 0px,#148080 3.25px,#208880 3.25px,#208880 5.75px,#30987c 5.75px,#30987c 8px,#3c98c0 8px,#3c98c0 10.75px,#5cb8b8 10.75px,#5cb8b8 13.25px,#7cb8b8 13.25px,#7cb8b8 16.75px,#9cb8b8 16.75px,#9cb8b8 19.75px,#C0DCC0 19.75px,#C0DCC0 24px)"></div><div class="a" style="left:0;top:0;width:100%;height:0.6px;background:#d0d0d0"></div><div class="w"></div><div class="m"></div><div class="s"></div><svg style="left:15.2px;top:1.8px" width="24" height="32" viewBox="0 0 24 32"><use href="#usd"/></svg><div class="n">202</div></div>
<div class="room" style="left:185px;top:292px"><div class="g" style="background:linear-gradient(#00ff00 0px,#00ff00 4.25px,#20e030 4.25px,#20e030 6.75px,#38de48 6.75px,#38de48 11px,#5cd88c 11px,#5cd88c 13.25px,#70dc88 13.25px,#70dc88 16.75px,#8ce080 16.75px,#8ce080 20px,#C0DCC0 20px,#C0DCC0 24.5px)"></div><div class="a" style="left:0;top:0;width:100%;height:0.6px;background:#d0d0d0"></div><div class="w"></div><div class="m"></div><div class="s"></div><svg style="left:15.2px;top:1.8px" width="24" height="32" viewBox="0 0 24 32"><use href="#usd"/></svg><div class="n">203</div></div>
<div class="room" style="left:242px;top:292px"><div class="g" style="background:linear-gradient(#148080 0px,#148080 3.25px,#208880 3.25px,#208880 5.75px,#30987c 5.75px,#30987c 8px,#3c98c0 8px,#3c98c0 10.75px,#5cb8b8 10.75px,#5cb8b8 13.25px,#7cb8b8 13.25px,#7cb8b8 16.75px,#9cb8b8 16.75px,#9cb8b8 19.75px,#C0DCC0 19.75px,#C0DCC0 24px)"></div><div class="a" style="left:0;top:0;width:100%;height:0.6px;background:#d0d0d0"></div><div class="w"></div><div class="m"></div><div class="s"></div><svg style="left:15.2px;top:1.8px" width="24" height="32" viewBox="0 0 24 32"><use href="#usd"/></svg><div class="n">204</div></div>
<div class="room" style="left:299px;top:292px"><div class="g" style="background:linear-gradient(#ff0000 0px,#ff0000 4px,#e02040 4px,#e02040 6px,#e04444 6px,#e04444 9.75px,#e06040 9.75px,#e06040 11px,#e06080 11px,#e06080 13px,#e08080 13px,#e08080 17px,#e0a080 17px,#e0a080 19px,#e0a0c0 19px,#e0a0c0 24px)"></div><div class="a" style="left:0;top:0;width:100%;height:0.6px;background:#d0d0d0"></div><div class="w"></div><div class="m"></div><div class="s"></div><svg style="left:0;top:0" width="57" height="40" viewBox="0 0 57 40"><use href="#bed"/></svg><div class="n">205</div></div>
<div class="room" style="left:356px;top:292px"><div class="g" style="background:linear-gradient(#ff0000 0px,#ff0000 4px,#e02040 4px,#e02040 6px,#e04444 6px,#e04444 9.75px,#e06040 9.75px,#e06040 11px,#e06080 11px,#e06080 13px,#e08080 13px,#e08080 17px,#e0a080 17px,#e0a080 19px,#e0a0c0 19px,#e0a0c0 24px)"></div><div class="a" style="left:0;top:0;width:100%;height:0.6px;background:#d0d0d0"></div><div class="w"></div><div class="m"></div><div class="s"></div><svg style="left:0;top:0" width="57" height="40" viewBox="0 0 57 40"><use href="#bed"/></svg><div class="n">206</div></div>
<div class="room" style="left:185px;top:412px"><div class="g" style="background:linear-gradient(#148080 0px,#148080 3.25px,#208880 3.25px,#208880 5.75px,#30987c 5.75px,#30987c 8px,#3c98c0 8px,#3c98c0 10.75px,#5cb8b8 10.75px,#5cb8b8 13.25px,#7cb8b8 13.25px,#7cb8b8 16.75px,#9cb8b8 16.75px,#9cb8b8 19.75px,#C0DCC0 19.75px,#C0DCC0 24px)"></div><div class="a" style="left:0;top:0;width:100%;height:0.6px;background:#d0d0d0"></div><div class="w"></div><div class="m"></div><div class="s"></div><svg style="left:15.2px;top:1.8px" width="24" height="32" viewBox="0 0 24 32"><use href="#usd"/></svg><div class="n">301</div></div>
<div class="room" style="left:242px;top:412px"><div class="g" style="background:linear-gradient(#00ff00 0px,#00ff00 4.25px,#20e030 4.25px,#20e030 6.75px,#38de48 6.75px,#38de48 11px,#5cd88c 11px,#5cd88c 13.25px,#70dc88 13.25px,#70dc88 16.75px,#8ce080 16.75px,#8ce080 20px,#C0DCC0 20px,#C0DCC0 24.5px)"></div><div class="a" style="left:0;top:0;width:100%;height:0.6px;background:#d0d0d0"></div><div class="w"></div><div class="m"></div><div class="s"></div><svg style="left:0;top:0" width="57" height="40" viewBox="0 0 57 40"><use href="#bed"/></svg><div class="n">302</div></div>
<div class="room" style="left:299px;top:412px"><div class="g" style="background:linear-gradient(#00ff00 0px,#00ff00 4.25px,#20e030 4.25px,#20e030 6.75px,#38de48 6.75px,#38de48 11px,#5cd88c 11px,#5cd88c 13.25px,#70dc88 13.25px,#70dc88 16.75px,#8ce080 16.75px,#8ce080 20px,#C0DCC0 20px,#C0DCC0 24.5px)"></div><div class="a" style="left:0;top:0;width:100%;height:0.6px;background:#d0d0d0"></div><div class="w"></div><div class="m"></div><div class="s"></div><svg style="left:12px;top:1.6px" width="31.5" height="31.5" viewBox="0 0 30 30"><use href="#cal2"/></svg><div class="n">303</div></div>
<div class="room" style="left:356px;top:412px"><div class="g" style="background:linear-gradient(#148080 0px,#148080 3.25px,#208880 3.25px,#208880 5.75px,#30987c 5.75px,#30987c 8px,#3c98c0 8px,#3c98c0 10.75px,#5cb8b8 10.75px,#5cb8b8 13.25px,#7cb8b8 13.25px,#7cb8b8 16.75px,#9cb8b8 16.75px,#9cb8b8 19.75px,#C0DCC0 19.75px,#C0DCC0 24px)"></div><div class="a" style="left:0;top:0;width:100%;height:0.6px;background:#d0d0d0"></div><div class="w"></div><div class="m"></div><div class="s"></div><svg style="left:0;top:0" width="57" height="40" viewBox="0 0 57 40"><use href="#bed"/></svg><div class="n">304</div></div>
<div class="room" style="left:413px;top:412px"><div class="g" style="background:linear-gradient(#ff0000 0px,#ff0000 4px,#e02040 4px,#e02040 6px,#e04444 6px,#e04444 9.75px,#e06040 9.75px,#e06040 11px,#e06080 11px,#e06080 13px,#e08080 13px,#e08080 17px,#e0a080 17px,#e0a080 19px,#e0a0c0 19px,#e0a0c0 24px)"></div><div class="a" style="left:0;top:0;width:100%;height:0.6px;background:#d0d0d0"></div><div class="w"></div><div class="m"></div><div class="s"></div><svg style="left:0;top:0" width="57" height="40" viewBox="0 0 57 40"><use href="#bed"/></svg><div class="n">305</div></div>
<div class="room" style="left:470px;top:412px"><div class="g" style="background:linear-gradient(#ff0000 0px,#ff0000 4px,#e02040 4px,#e02040 6px,#e04444 6px,#e04444 9.75px,#e06040 9.75px,#e06040 11px,#e06080 11px,#e06080 13px,#e08080 13px,#e08080 17px,#e0a080 17px,#e0a080 19px,#e0a0c0 19px,#e0a0c0 24px)"></div><div class="a" style="left:0;top:0;width:100%;height:0.6px;background:#d0d0d0"></div><div class="w"></div><div class="m"></div><div class="s"></div><svg style="left:12px;top:1.6px" width="31.5" height="31.5" viewBox="0 0 30 30"><use href="#cal2"/></svg><div class="n">306</div></div>
<div class="room" style="left:527px;top:412px"><div class="g" style="background:linear-gradient(#ff0000 0px,#ff0000 4px,#e02040 4px,#e02040 6px,#e04444 6px,#e04444 9.75px,#e06040 9.75px,#e06040 11px,#e06080 11px,#e06080 13px,#e08080 13px,#e08080 17px,#e0a080 17px,#e0a080 19px,#e0a0c0 19px,#e0a0c0 24px)"></div><div class="a" style="left:0;top:0;width:100%;height:0.6px;background:#d0d0d0"></div><div class="w"></div><div class="m"></div><div class="s"></div><svg style="left:0;top:0" width="57" height="40" viewBox="0 0 57 40"><use href="#bed"/></svg><div class="n">307</div></div>
<div class="room" style="left:584px;top:412px"><div class="g" style="background:linear-gradient(#ff0000 0px,#ff0000 4px,#e02040 4px,#e02040 6px,#e04444 6px,#e04444 9.75px,#e06040 9.75px,#e06040 11px,#e06080 11px,#e06080 13px,#e08080 13px,#e08080 17px,#e0a080 17px,#e0a080 19px,#e0a0c0 19px,#e0a0c0 24px)"></div><div class="a" style="left:0;top:0;width:100%;height:0.6px;background:#d0d0d0"></div><div class="w"></div><div class="m"></div><div class="s"></div><svg style="left:15.2px;top:1.8px" width="24" height="32" viewBox="0 0 24 32"><use href="#usd"/></svg><div class="n">308</div></div>
<div class="room" style="left:641px;top:412px"><div class="g" style="background:linear-gradient(#ff0000 0px,#ff0000 4px,#e02040 4px,#e02040 6px,#e04444 6px,#e04444 9.75px,#e06040 9.75px,#e06040 11px,#e06080 11px,#e06080 13px,#e08080 13px,#e08080 17px,#e0a080 17px,#e0a080 19px,#e0a0c0 19px,#e0a0c0 24px)"></div><div class="a" style="left:0;top:0;width:100%;height:0.6px;background:#d0d0d0"></div><div class="w"></div><div class="m"></div><div class="s"></div><svg style="left:15.2px;top:1.8px" width="24" height="32" viewBox="0 0 24 32"><use href="#usd"/></svg><div class="n">309</div></div>
<div class="room" style="left:14px;top:472px"><div class="g" style="background:linear-gradient(#00ff00 0px,#00ff00 4.25px,#20e030 4.25px,#20e030 6.75px,#38de48 6.75px,#38de48 11px,#5cd88c 11px,#5cd88c 13.25px,#70dc88 13.25px,#70dc88 16.75px,#8ce080 16.75px,#8ce080 20px,#C0DCC0 20px,#C0DCC0 24.5px)"></div><div class="a" style="left:0;top:0;width:100%;height:0.6px;background:#d0d0d0"></div><div class="w"></div><div class="m"></div><div class="s"></div><svg style="left:0;top:0" width="57" height="40" viewBox="0 0 57 40"><use href="#bed"/></svg><div class="n">310</div></div>
<div class="room" style="left:71px;top:472px"><div class="g" style="background:linear-gradient(#00ff00 0px,#00ff00 4.25px,#20e030 4.25px,#20e030 6.75px,#38de48 6.75px,#38de48 11px,#5cd88c 11px,#5cd88c 13.25px,#70dc88 13.25px,#70dc88 16.75px,#8ce080 16.75px,#8ce080 20px,#C0DCC0 20px,#C0DCC0 24.5px)"></div><div class="a" style="left:0;top:0;width:100%;height:0.6px;background:#d0d0d0"></div><div class="w"></div><div class="m"></div><div class="s"></div><svg style="left:0;top:0" width="57" height="40" viewBox="0 0 57 40"><use href="#bed"/></svg><div class="n">311</div></div>
<div class="room" style="left:128px;top:472px"><div class="g" style="background:linear-gradient(#00ff00 0px,#00ff00 4.25px,#20e030 4.25px,#20e030 6.75px,#38de48 6.75px,#38de48 11px,#5cd88c 11px,#5cd88c 13.25px,#70dc88 13.25px,#70dc88 16.75px,#8ce080 16.75px,#8ce080 20px,#C0DCC0 20px,#C0DCC0 24.5px)"></div><div class="a" style="left:0;top:0;width:100%;height:0.6px;background:#d0d0d0"></div><div class="w"></div><div class="m"></div><div class="s"></div><svg style="left:0;top:0" width="57" height="40" viewBox="0 0 57 40"><use href="#bed"/></svg><div class="n">312</div></div>
<div class="room" style="left:185px;top:472px"><div class="g" style="background:linear-gradient(#148080 0px,#148080 3.25px,#208880 3.25px,#208880 5.75px,#30987c 5.75px,#30987c 8px,#3c98c0 8px,#3c98c0 10.75px,#5cb8b8 10.75px,#5cb8b8 13.25px,#7cb8b8 13.25px,#7cb8b8 16.75px,#9cb8b8 16.75px,#9cb8b8 19.75px,#C0DCC0 19.75px,#C0DCC0 24px)"></div><div class="a" style="left:0;top:0;width:100%;height:0.6px;background:#d0d0d0"></div><div class="w"></div><div class="m"></div><div class="s"></div><svg style="left:0;top:0" width="57" height="40" viewBox="0 0 57 40"><use href="#bed"/></svg><div class="n">313</div></div>
<div class="room" style="left:242px;top:472px"><div class="g" style="background:linear-gradient(#148080 0px,#148080 3.25px,#208880 3.25px,#208880 5.75px,#30987c 5.75px,#30987c 8px,#3c98c0 8px,#3c98c0 10.75px,#5cb8b8 10.75px,#5cb8b8 13.25px,#7cb8b8 13.25px,#7cb8b8 16.75px,#9cb8b8 16.75px,#9cb8b8 19.75px,#C0DCC0 19.75px,#C0DCC0 24px)"></div><div class="a" style="left:0;top:0;width:100%;height:0.6px;background:#d0d0d0"></div><div class="w"></div><div class="m"></div><div class="s"></div><svg style="left:15.2px;top:1.8px" width="24" height="32" viewBox="0 0 24 32"><use href="#usd"/></svg><div class="n">314</div></div>
<div class="room" style="left:299px;top:472px"><div class="g" style="background:linear-gradient(#ff0000 0px,#ff0000 4px,#e02040 4px,#e02040 6px,#e04444 6px,#e04444 9.75px,#e06040 9.75px,#e06040 11px,#e06080 11px,#e06080 13px,#e08080 13px,#e08080 17px,#e0a080 17px,#e0a080 19px,#e0a0c0 19px,#e0a0c0 24px)"></div><div class="a" style="left:0;top:0;width:100%;height:0.6px;background:#d0d0d0"></div><div class="w"></div><div class="m"></div><div class="s"></div><svg style="left:16px;top:2px" width="24" height="32" viewBox="0 0 24 32"><path d="M10.500 1 L3 31 M12.500 1 L20 31" stroke="#e8a0b0" stroke-width="1" fill="none"/></svg><div class="n">315</div></div>
<div class="room" style="left:356px;top:472px"><div class="g" style="background:linear-gradient(#148080 0px,#148080 3.25px,#208880 3.25px,#208880 5.75px,#30987c 5.75px,#30987c 8px,#3c98c0 8px,#3c98c0 10.75px,#5cb8b8 10.75px,#5cb8b8 13.25px,#7cb8b8 13.25px,#7cb8b8 16.75px,#9cb8b8 16.75px,#9cb8b8 19.75px,#C0DCC0 19.75px,#C0DCC0 24px)"></div><div class="a" style="left:0;top:0;width:100%;height:0.6px;background:#d0d0d0"></div><div class="w"></div><div class="m"></div><div class="s"></div><svg style="left:15.2px;top:1.8px" width="24" height="32" viewBox="0 0 24 32"><use href="#usd"/></svg><div class="n">316</div></div>
<div class="a" style="left:386px;top:495px;width:3.5px;height:106.5px;background:#aeb2ba;"></div>
<div class="a" style="left:637px;top:494px;width:3.2px;height:107px;background:#a6a8b0;"></div>
<div class="a" style="left:640.2px;top:494px;width:4.2px;height:107px;background:#c0c0c4;"></div>
<div class="pn" style="left:112px;top:494px;width:274px;height:106.5px"></div>
<div class="pt" style="left:120px;top:502px;letter-spacing:-0.05px">Habitaciones para check-out</div>
<div class="a" style="left:366px;top:501.5px;width:18px;height:18px;background:#FFFBF0;"></div>
<div class="a" style="left:112px;top:524px;width:274px;height:1px;background:#808080;"></div>
<div class="a" style="left:112px;top:524px;width:1px;height:76.5px;background:#808080;"></div>
<div class="a" style="left:113px;top:543px;width:256px;height:19px;background:#FFFBF0;"></div>
<div class="a" style="left:113px;top:543px;width:12px;height:57.5px;background:#FFFBF0;"></div>
<div class="a" style="left:113px;top:543px;width:255px;height:1px;background:#909090;"></div>
<div class="a" style="left:113px;top:562px;width:255px;height:1px;background:#909090;"></div>
<div class="a" style="left:113px;top:581px;width:255px;height:1px;background:#909090;"></div>
<div class="a" style="left:125px;top:525px;width:1px;height:18px;background:#d8d8d8;"></div>
<div class="a" style="left:125px;top:543px;width:1px;height:57.5px;background:#909090;"></div>
<div class="a" style="left:179px;top:525px;width:1px;height:18px;background:#d8d8d8;"></div>
<div class="a" style="left:179px;top:543px;width:1px;height:57.5px;background:#909090;"></div>
<div class="a" style="left:274px;top:525px;width:1px;height:18px;background:#d8d8d8;"></div>
<div class="a" style="left:274px;top:543px;width:1px;height:57.5px;background:#909090;"></div>
<div class="a" style="left:368px;top:543px;width:1px;height:57.5px;background:#909090;"></div>
<div class="gc" style="left:127px;top:529px;width:52px">Habitación</div>
<div class="gc" style="left:181px;top:529px;width:93px">Salida</div>
<div class="gc" style="left:276px;top:529px;width:92px">LLegada</div>
<div class="gc" style="left:127px;top:547px;width:52px;letter-spacing:0px">202</div>
<div class="gc" style="left:181px;top:547px;width:93px;letter-spacing:0px">31.08.2018</div>
<div class="gc" style="left:276px;top:547px;width:92px;letter-spacing:0px">27.08.2018 08:19</div>
<div class="gc" style="left:127px;top:566px;width:52px;letter-spacing:0px">203</div>
<div class="gc" style="left:181px;top:566px;width:93px;letter-spacing:0px">30.08.2018</div>
<div class="gc" style="left:276px;top:566px;width:92px;letter-spacing:0px">28.08.2018 01:14</div>
<div class="gc" style="left:127px;top:585px;width:52px;letter-spacing:0px">204</div>
<div class="gc" style="left:181px;top:585px;width:93px;letter-spacing:0px">28.08.2018</div>
<div class="gc" style="left:276px;top:585px;width:92px;letter-spacing:0px">27.08.2018 12:42</div>
<svg class="a" style="left:116px;top:548px" width="6" height="10" viewBox="0 0 6 10"><path d="M0 0 L5 5 L0 10Z" fill="#000"/></svg>
<div class="a" style="left:368px;top:525px;width:17px;height:75.5px;background:#FFFBF0"></div>
<svg class="a" style="left:371px;top:531px" width="10" height="7" viewBox="0 0 10 7"><path d="M1 6 L5 2 L9 6" fill="none" stroke="#404060" stroke-width="1.6"/></svg>
<svg class="a" style="left:371px;top:588.5px" width="10" height="7" viewBox="0 0 10 7"><path d="M1 1 L5 5 L9 1" fill="none" stroke="#404060" stroke-width="1.6"/></svg>
<div class="a" style="left:369px;top:542.6px;width:14.3px;height:14.6px;background:#C0C0C0;"></div>
<div class="pn" style="left:389px;top:493px;width:248px;height:106.5px"></div>
<div class="pt" style="left:397px;top:501px;letter-spacing:-0.18px">Clase de habitación</div>
<div class="a" style="left:617px;top:500.5px;width:18px;height:18px;background:#FFFBF0;"></div>
<div class="a" style="left:389px;top:523px;width:248px;height:1px;background:#808080;"></div>
<div class="a" style="left:389px;top:523px;width:1px;height:76.5px;background:#808080;"></div>
<div class="a" style="left:390px;top:542px;width:230px;height:19px;background:#FFFBF0;"></div>
<div class="a" style="left:390px;top:542px;width:12px;height:57.5px;background:#FFFBF0;"></div>
<div class="a" style="left:390px;top:542px;width:229px;height:1px;background:#909090;"></div>
<div class="a" style="left:390px;top:561px;width:229px;height:1px;background:#909090;"></div>
<div class="a" style="left:390px;top:580px;width:229px;height:1px;background:#909090;"></div>
<div class="a" style="left:402px;top:524px;width:1px;height:18px;background:#d8d8d8;"></div>
<div class="a" style="left:402px;top:542px;width:1px;height:57.5px;background:#909090;"></div>
<div class="a" style="left:557px;top:524px;width:1px;height:18px;background:#d8d8d8;"></div>
<div class="a" style="left:557px;top:542px;width:1px;height:57.5px;background:#909090;"></div>
<div class="a" style="left:619px;top:542px;width:1px;height:57.5px;background:#909090;"></div>
<div class="gc" style="left:404px;top:528px;width:153px">Clase</div>
<div class="gc" style="left:559px;top:528px;width:60px">Color</div>
<div class="gc" style="left:404px;top:546px;width:153px;letter-spacing:-0.62px">&nbsp;EJECUTIVA DOBLE</div>
<div class="gc" style="left:559px;top:546px;width:60px;letter-spacing:0px"><span style="display:inline-block;width:27px;height:12px;background:#00ff00;vertical-align:-2px;margin-right:3px;margin-left:1px"></span><span style="letter-spacing:-0.3px">clLime</span></div>
<div class="gc" style="left:404px;top:565px;width:153px;letter-spacing:-0.62px">CONFORT&nbsp; KING</div>
<div class="gc" style="left:559px;top:565px;width:60px;letter-spacing:0px"><span style="display:inline-block;width:27px;height:12px;background:#008080;vertical-align:-2px;margin-right:3px;margin-left:1px"></span><span style="letter-spacing:-0.3px">clTeal</span></div>
<div class="gc" style="left:404px;top:584px;width:153px;letter-spacing:-0.62px">TUPINANBA</div>
<div class="gc" style="left:559px;top:584px;width:60px;letter-spacing:0px"><span style="display:inline-block;width:27px;height:12px;background:#ff00ff;vertical-align:-2px;margin-right:3px;margin-left:1px"></span><span style="letter-spacing:-0.3px">clFuchsia</span></div>
<svg class="a" style="left:393px;top:547px" width="6" height="10" viewBox="0 0 6 10"><path d="M0 0 L5 5 L0 10Z" fill="#000"/></svg>
<div class="a" style="left:619px;top:524px;width:17px;height:75.5px;background:#FFFBF0"></div>
<svg class="a" style="left:622px;top:530px" width="10" height="7" viewBox="0 0 10 7"><path d="M1 6 L5 2 L9 6" fill="none" stroke="#404060" stroke-width="1.6"/></svg>
<svg class="a" style="left:622px;top:587.5px" width="10" height="7" viewBox="0 0 10 7"><path d="M1 1 L5 5 L9 1" fill="none" stroke="#404060" stroke-width="1.6"/></svg>
<div class="a" style="left:620px;top:541.6px;width:14.3px;height:14.6px;background:#C0C0C0;"></div>
<div class="pn" style="left:647px;top:494px;width:253px;height:106.5px"></div>
<div class="pt" style="left:655px;top:502px;letter-spacing:-0.2px">Habitaciones ocupadas y reservadas</div>
<div class="a" style="left:880px;top:501.5px;width:18px;height:18px;background:#FFFBF0;"></div>
<div class="a" style="left:885.5px;top:501.5px;width:8px;height:18px;background:#C0DCC0;"></div>
<div class="t" style="left:887.2px;top:506px;font-size:8.5px;color:#fff;font-weight:bold">x</div>
<div class="a" style="left:647px;top:524px;width:253px;height:1px;background:#808080;"></div>
<div class="a" style="left:647px;top:524px;width:1px;height:76.5px;background:#808080;"></div>
<div class="a" style="left:648px;top:543px;width:235px;height:19px;background:#FFFBF0;"></div>
<div class="a" style="left:648px;top:543px;width:12px;height:57.5px;background:#FFFBF0;"></div>
<div class="a" style="left:648px;top:543px;width:234px;height:1px;background:#909090;"></div>
<div class="a" style="left:648px;top:562px;width:234px;height:1px;background:#909090;"></div>
<div class="a" style="left:648px;top:581px;width:234px;height:1px;background:#909090;"></div>
<div class="a" style="left:660px;top:525px;width:1px;height:18px;background:#d8d8d8;"></div>
<div class="a" style="left:660px;top:543px;width:1px;height:57.5px;background:#909090;"></div>
<div class="a" style="left:705px;top:525px;width:1px;height:18px;background:#d8d8d8;"></div>
<div class="a" style="left:705px;top:543px;width:1px;height:57.5px;background:#909090;"></div>
<div class="a" style="left:783px;top:525px;width:1px;height:18px;background:#d8d8d8;"></div>
<div class="a" style="left:783px;top:543px;width:1px;height:57.5px;background:#909090;"></div>
<div class="a" style="left:862px;top:525px;width:1px;height:18px;background:#d8d8d8;"></div>
<div class="a" style="left:862px;top:543px;width:1px;height:57.5px;background:#909090;"></div>
<div class="a" style="left:883px;top:543px;width:1px;height:57.5px;background:#909090;"></div>
<div class="gc" style="left:662px;top:529px;width:43px">Habitación</div>
<div class="gc" style="left:707px;top:529px;width:76px">Llegada</div>
<div class="gc" style="left:785px;top:529px;width:77px">Salida</div>
<div class="gc" style="left:864px;top:529px;width:19px">Tip</div>
<div class="gc" style="left:662px;top:547px;width:43px;letter-spacing:0px">202</div>
<div class="gc" style="left:707px;top:547px;width:76px;letter-spacing:0px">31/08/2018</div>
<div class="gc" style="left:785px;top:547px;width:77px;letter-spacing:0px">1/09/2018</div>
<div class="gc" style="left:864px;top:547px;width:19px;letter-spacing:0px">Ocu</div>
<div class="gc" style="left:662px;top:566px;width:43px;letter-spacing:0px">202</div>
<div class="gc" style="left:707px;top:566px;width:76px;letter-spacing:0px">8/09/2018</div>
<div class="gc" style="left:785px;top:566px;width:77px;letter-spacing:0px">9/09/2018</div>
<div class="gc" style="left:864px;top:566px;width:19px;letter-spacing:0px">Ocu</div>
<div class="gc" style="left:662px;top:585px;width:43px;letter-spacing:0px">204</div>
<div class="gc" style="left:707px;top:585px;width:76px;letter-spacing:0px">7/09/2018</div>
<div class="gc" style="left:785px;top:585px;width:77px;letter-spacing:0px">8/09/2018</div>
<div class="gc" style="left:864px;top:585px;width:19px;letter-spacing:0px">Ocu</div>
<svg class="a" style="left:651px;top:548px" width="6" height="10" viewBox="0 0 6 10"><path d="M0 0 L5 5 L0 10Z" fill="#000"/></svg>
<div class="a" style="left:882px;top:525px;width:17px;height:75.5px;background:#FFFBF0"></div>
<svg class="a" style="left:885px;top:531px" width="10" height="7" viewBox="0 0 10 7"><path d="M1 6 L5 2 L9 6" fill="none" stroke="#404060" stroke-width="1.6"/></svg>
<svg class="a" style="left:885px;top:588.5px" width="10" height="7" viewBox="0 0 10 7"><path d="M1 1 L5 5 L9 1" fill="none" stroke="#404060" stroke-width="1.6"/></svg>
<div class="a" style="left:883px;top:542.6px;width:14.3px;height:14.6px;background:#C0C0C0;"></div>
<div class="a" style="left:881.1px;top:443px;width:171.5px;height:37px;border-radius:14px 14px 0 0;background:#A6CAF0"></div>
<div class="a" style="left:882.0px;top:443.9px;width:169.7px;height:36.1px;border-radius:13.1px 13.1px 0 0;background:#C0DCC0"></div>
<div class="a" style="left:885.1px;top:447px;width:163.5px;height:33px;border-radius:10px 10px 0 0;background:#A6CAF0"></div>
<div class="a" style="left:887.2px;top:449.1px;width:159.3px;height:30.9px;border-radius:7.9px 7.9px 0 0;background:#C0DCC0"></div>
<div class="a" style="left:889.0px;top:450.9px;width:155.7px;height:29.1px;border-radius:6.1px 6.1px 0 0;background:#A6CAF0"></div>
<div class="a" style="left:891.4px;top:453.3px;width:150.9px;height:26.7px;border-radius:3.6999999999999993px 3.6999999999999993px 0 0;background:#C0C0C0"></div>
<div class="a" style="left:892.8000000000001px;top:454.7px;width:148.1px;height:25.3px;border-radius:2.3000000000000007px 2.3000000000000007px 0 0;background:#C0DCC0"></div>
<div class="pn" style="left:894px;top:455.5px;width:146px;height:145px"></div>
<div class="pt" style="left:902px;top:464px">Hora actual</div>
<div class="a" style="left:1020px;top:463px;width:18.5px;height:18.5px;background:#FFFBF0;"></div>
<div class="a" style="left:897px;top:489px;width:141.2px;height:110.5px;background:#FFFBF0;"></div>
<svg class="a" style="left:897px;top:489px" width="141" height="111" viewBox="0 0 141 111"><use href="#clock"/></svg>
<div class="a" style="left:0px;top:42px;width:217px;height:200px;background:#FFFBF0;border:1px solid #9a9a9a;box-shadow:2.5px 2.5px 2px rgba(60,60,60,.6)"></div>
<div class="a" style="left:8px;top:89px;width:206px;height:22px;background:#A6CAF0;"></div>
<div class="mi" style="top:49px">Datos del hotel</div>
<div class="mi" style="top:71px">Utilidades de la base de datos</div>
<div class="mi" style="top:93px">Configuración</div>
<div class="mi" style="top:115px">Formatos</div>
<div class="mi" style="top:143px">Actualizar programa</div>
<div class="mi" style="top:171px">Calculadora</div>
<div class="mi" style="top:199px">Salir</div>
<div class="mi" style="left:158px;top:171px">Ctrl+C</div>
<div class="sep" style="top:135px"></div>
<div class="sep" style="top:163px"></div>
<div class="sep" style="top:191px"></div>
<svg class="a" style="left:203px;top:117px" width="5" height="9" viewBox="0 0 5 9"><path d="M0 0 L4.5 4.5 L0 9Z" fill="#000"/></svg>
<svg class="a" style="left:6px;top:48px" width="16" height="16" viewBox="0 0 16 16"><use href="#ok"/></svg>
<svg class="a" style="left:6px;top:142px" width="16" height="16" viewBox="0 0 16 16"><use href="#ok"/></svg>
<svg class="a" style="left:6px;top:170px" width="16" height="16" viewBox="0 0 16 16"><use href="#ok"/></svg>
<svg class="a" style="left:6px;top:70px" width="16" height="16" viewBox="0 0 16 16"><use href="#tools"/></svg>
<svg class="a" style="left:6px;top:92px" width="16" height="16" viewBox="0 0 16 16"><use href="#tools"/></svg>
<svg class="a" style="left:5px;top:197px" width="18" height="18" viewBox="0 0 18 18"><use href="#exit"/></svg>
<div class="a" style="left:1px;top:20px;width:56px;height:25px;border:5px solid #DC143C"></div>
<div class="a" style="left:23px;top:44px;width:5px;height:44px;background:#DC143C;"></div>
<div class="a" style="left:3px;top:86.5px;width:226px;height:4.5px;background:#DC143C;"></div>
<div class="a" style="left:3px;top:107.5px;width:226px;height:5.5px;background:#DC143C;"></div>
<div class="a" style="left:3px;top:86.5px;width:5.4px;height:26.5px;background:#DC143C;"></div>
<div class="a" style="left:223.7px;top:86.5px;width:5.3px;height:26.5px;background:#DC143C;"></div>
</body></html>
